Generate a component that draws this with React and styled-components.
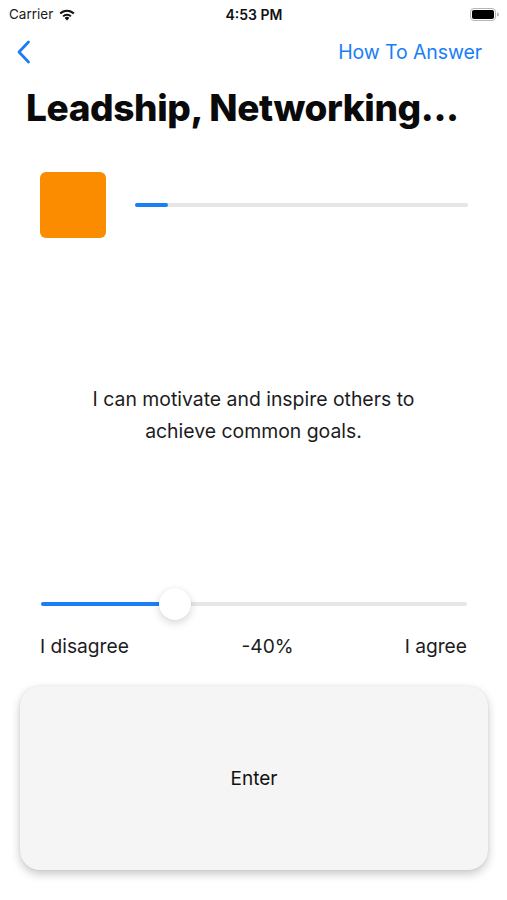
import React from "react";
import styled, { createGlobalStyle } from "styled-components";

const Global = createGlobalStyle`
  html, body { margin: 0; padding: 0; background: #ffffff; }
  body { font-family: Inter, "Noto Sans", sans-serif; -webkit-font-smoothing: antialiased; }
  * { box-sizing: border-box; }
`;

const Screen = styled.div`
  width: 507px;
  height: 900px;
  display: flex;
  flex-direction: column;
  background: #ffffff;
  overflow: hidden;
`;

const StatusBar = styled.div`
  height: 28px;
  display: grid;
  grid-template-columns: 1fr auto 1fr;
  align-items: center;
  padding: 0 8px 0 9px;
`;

const Carrier = styled.div`
  display: flex;
  align-items: center;
  gap: 5px;
  font-size: 13.5px;
  color: #1a1a1a;
`;

const Time = styled.div`
  font-size: 14px;
  font-weight: 600;
  color: #111;
`;

const Battery = styled.div`
  justify-self: end;
  display: flex;
  align-items: center;
`;

const NavBar = styled.div`
  height: 48px;
  display: flex;
  align-items: center;
  justify-content: space-between;
  padding: 0 25px 0 16px;
`;

const NavLink = styled.span`
  color: #1a7ef5;
  font-size: 19.5px;
  letter-spacing: -0.1px;
`;

const Title = styled.h1`
  margin: 10px 0 0 26px;
  font-size: 37px;
  line-height: 44px;
  font-weight: 800;
  letter-spacing: -0.4px;
  color: #0a0a0a;
`;

const ProgressRow = styled.div`
  margin: 42px 39px 0 40px;
  display: flex;
  align-items: center;
  gap: 29px;
`;

const Swatch = styled.div`
  width: 66px;
  height: 66px;
  border-radius: 6px;
  background: ${(p) => p.color};
  flex-shrink: 0;
`;

const Track = styled.div`
  flex: 1;
  height: ${(p) => p.h}px;
  border-radius: ${(p) => p.h / 2}px;
  background: #e6e6e8;
  position: relative;
`;

const Fill = styled.div`
  height: 100%;
  border-radius: inherit;
  background: #1a7ef5;
`;

const Question = styled.p`
  margin: 145px 30px 0;
  text-align: center;
  font-size: 19.4px;
  line-height: 32px;
  color: #1c1c1e;
`;

const SliderWrap = styled.div`
  margin: 141px 40px 0 41px;
  height: 32px;
  display: flex;
  align-items: center;
  position: relative;
`;

const Thumb = styled.div`
  position: absolute;
  top: 0;
  width: 32px;
  height: 32px;
  margin-left: -16px;
  border-radius: 50%;
  background: #ffffff;
  box-shadow: 0 3px 8px rgba(0, 0, 0, 0.16), 0 0 1px rgba(0, 0, 0, 0.1);
`;

const Labels = styled.div`
  margin: 14px 40px 0;
  height: 24px;
  display: grid;
  grid-template-columns: 1fr auto 1fr;
  align-items: center;
  font-size: 19.2px;
  color: #1c1c1e;
`;

const Label = styled.span`
  justify-self: ${(p) => p.align};
  ${(p) => (p.shift ? `transform: translateX(${p.shift}px);` : "")}
`;

const EnterButton = styled.button`
  margin: 28px 19px 0 20px;
  height: 184px;
  border: none;
  border-radius: 20px;
  background: #f5f5f5;
  box-shadow: 0 4px 10px rgba(0, 0, 0, 0.22), 0 0 2px rgba(0, 0, 0, 0.08);
  font-family: inherit;
  font-size: 19px;
  color: #111;
  display: flex;
  align-items: center;
  justify-content: center;
`;

const WifiIcon = () => (
  <svg width="18" height="13" viewBox="0 0 18 13">
    <path d="M9 12.5 L6.6 9.9 A3.4 3.4 0 0 1 11.4 9.9 Z" fill="#111" />
    <path d="M4.4 7.7 A6.5 6.5 0 0 1 13.6 7.7 L12.2 9.1 A4.6 4.6 0 0 0 5.8 9.1 Z" fill="#111" />
    <path d="M1.5 4.8 A10.6 10.6 0 0 1 16.5 4.8 L15.1 6.3 A8.6 8.6 0 0 0 2.9 6.3 Z" fill="#111" />
  </svg>
);

const BatteryIcon = () => (
  <svg width="29" height="13" viewBox="0 0 29 13">
    <rect x="0.5" y="0.5" width="25" height="12" rx="3.5" fill="none" stroke="#b5b5b5" />
    <rect x="2" y="2" width="22" height="9" rx="2" fill="#000" />
    <path d="M27 4.5 A2 2 0 0 1 27 8.5 Z" fill="#b5b5b5" />
  </svg>
);

const BackChevron = () => (
  <svg width="16" height="24" viewBox="0 0 16 24">
    <path d="M12.5 2 L3 12 L12.5 22" fill="none" stroke="#1a7ef5" strokeWidth="2.8" strokeLinecap="round" strokeLinejoin="round" />
  </svg>
);

export default function App() {
  const progress = 0.1;
  const value = 0.315;
  return (
    <>
      <Global />
      <Screen>
        <StatusBar>
          <Carrier>
            Carrier <WifiIcon />
          </Carrier>
          <Time>4:53 PM</Time>
          <Battery>
            <BatteryIcon />
          </Battery>
        </StatusBar>
        <NavBar>
          <BackChevron />
          <NavLink>How To Answer</NavLink>
        </NavBar>
        <Title>Leadship, Networking...</Title>
        <ProgressRow>
          <Swatch color="#fb8c00" />
          <Track h={4}>
            <Fill style={{ width: `${progress * 100}%` }} />
          </Track>
        </ProgressRow>
        <Question>
          I can motivate and inspire others to
          <br />
          achieve common goals.
        </Question>
        <SliderWrap>
          <Track h={4}>
            <Fill style={{ width: `${value * 100}%` }} />
          </Track>
          <Thumb style={{ left: `${value * 100}%` }} />
        </SliderWrap>
        <Labels>
          <Label align="start">I disagree</Label>
          <Label align="center" shift={14}>-40%</Label>
          <Label align="end">I agree</Label>
        </Labels>
        <EnterButton>Enter</EnterButton>
      </Screen>
    </>
  );
}
